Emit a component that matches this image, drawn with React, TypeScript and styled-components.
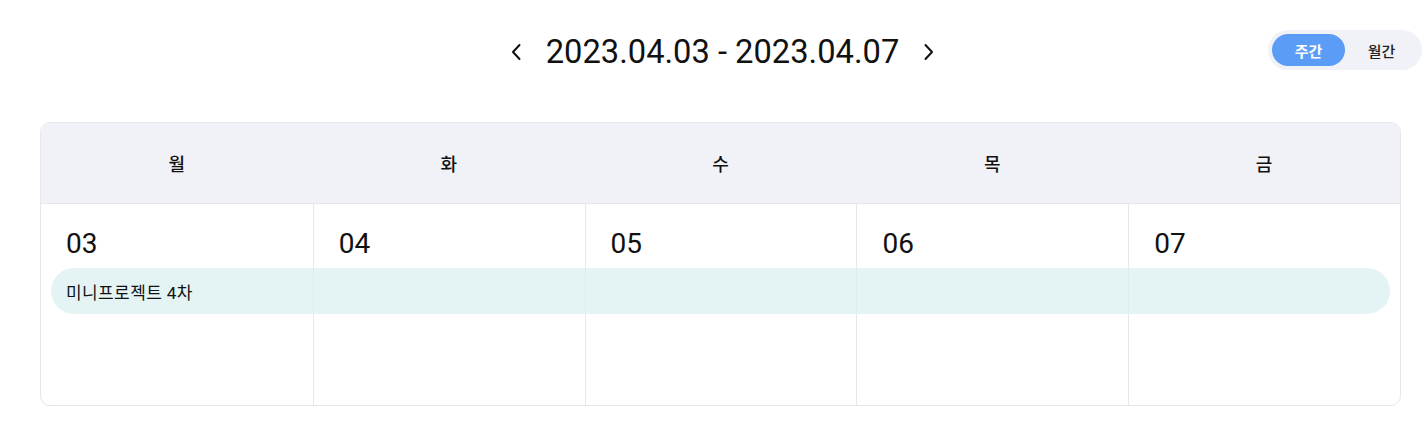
import * as React from "react";
import styled, { createGlobalStyle } from "styled-components";

const GlobalStyle = createGlobalStyle`
  html, body {
    margin: 0;
    padding: 0;
    background: #ffffff;
  }
  body {
    font-family: Roboto, "Noto Sans CJK KR", "Noto Sans", sans-serif;
    color: #111111;
  }
`;

const Page = styled.div`
  padding: 30px 26px 0 40px;
`;

const TopBar = styled.div`
  display: grid;
  grid-template-columns: 1fr auto 1fr;
  align-items: center;
  height: 40px;
  margin: 0 -21px 0 -17px;
`;

const Navigator = styled.div`
  grid-column: 2;
  display: flex;
  align-items: center;
  gap: 24px;
  padding-top: 4px;
`;

const ArrowButton = styled.button`
  display: flex;
  align-items: center;
  justify-content: center;
  width: 12px;
  height: 20px;
  padding: 0;
  border: none;
  background: none;
  cursor: pointer;
  color: #111;
`;

const RangeTitle = styled.h2`
  margin: 0;
  font-size: 32.7px;
  line-height: 36px;
  font-weight: 400;
  color: #111;
`;

const ViewToggle = styled.div`
  grid-column: 3;
  justify-self: end;
  display: flex;
  padding: 4px;
  background: #f1f2f7;
  border-radius: 20px;
`;

const ToggleButton = styled.button<{ $active?: boolean }>`
  width: 73px;
  height: 32px;
  border: none;
  border-radius: 16px;
  font-family: Roboto, "Noto Sans CJK KR", sans-serif;
  font-size: 15px;
  font-weight: ${(p) => (p.$active ? 700 : 500)};
  background: ${(p) => (p.$active ? "#5b9cf7" : "transparent")};
  color: ${(p) => (p.$active ? "#ffffff" : "#222")};
  cursor: pointer;
`;

const Calendar = styled.div`
  margin-top: 52px;
  border: 1px solid #e6e7ec;
  border-radius: 10px;
  overflow: hidden;
`;

const HeaderRow = styled.div`
  display: grid;
  grid-template-columns: repeat(5, 1fr);
  height: 80px;
  background: #f1f2f7;
  border-bottom: 1px solid #e6e7ec;
`;

const DayName = styled.div`
  display: flex;
  align-items: center;
  justify-content: center;
  font-size: 18px;
  font-weight: 500;
  color: #111;
`;

const WeekRow = styled.div`
  position: relative;
  display: grid;
  grid-template-columns: repeat(5, 1fr);
  height: 201px;
`;

const DayCell = styled.div`
  padding: 26px 25px 0;
  & + & {
    border-left: 1px solid #e6e7ec;
  }
`;

const DateNumber = styled.span`
  font-size: 28px;
  line-height: 28px;
  color: #111;
`;

const EventBar = styled.div`
  position: absolute;
  top: 64px;
  left: 10px;
  right: 10px;
  height: 46px;
  display: flex;
  align-items: center;
  padding-left: 15px;
  border-radius: 23px;
  background: rgba(218, 240, 240, 0.72);
  font-size: 17px;
  letter-spacing: 0.4px;
  color: #111;
`;

const ChevronLeft = () => (
  <svg width="12" height="18" viewBox="0 0 12 18" fill="none">
    <path d="M9.5 2 L3 9 L9.5 16" stroke="currentColor" strokeWidth="2" strokeLinecap="round" strokeLinejoin="round" />
  </svg>
);

const ChevronRight = () => (
  <svg width="12" height="18" viewBox="0 0 12 18" fill="none">
    <path d="M2.5 2 L9 9 L2.5 16" stroke="currentColor" strokeWidth="2" strokeLinecap="round" strokeLinejoin="round" />
  </svg>
);

const days = [
  { name: "월", date: "03" },
  { name: "화", date: "04" },
  { name: "수", date: "05" },
  { name: "목", date: "06" },
  { name: "금", date: "07" },
];

const App = () => {
  const [view, setView] = React.useState<"week" | "month">("week");

  return (
    <Page>
      <GlobalStyle />
      <TopBar>
        <Navigator>
          <ArrowButton aria-label="이전 주">
            <ChevronLeft />
          </ArrowButton>
          <RangeTitle>2023.04.03 - 2023.04.07</RangeTitle>
          <ArrowButton aria-label="다음 주">
            <ChevronRight />
          </ArrowButton>
        </Navigator>
        <ViewToggle>
          <ToggleButton $active={view === "week"} onClick={() => setView("week")}>
            주간
          </ToggleButton>
          <ToggleButton $active={view === "month"} onClick={() => setView("month")}>
            월간
          </ToggleButton>
        </ViewToggle>
      </TopBar>
      <Calendar>
        <HeaderRow>
          {days.map((d) => (
            <DayName key={d.name}>{d.name}</DayName>
          ))}
        </HeaderRow>
        <WeekRow>
          {days.map((d) => (
            <DayCell key={d.date}>
              <DateNumber>{d.date}</DateNumber>
            </DayCell>
          ))}
          <EventBar>미니프로젝트 4차</EventBar>
        </WeekRow>
      </Calendar>
    </Page>
  );
};

export default App;
